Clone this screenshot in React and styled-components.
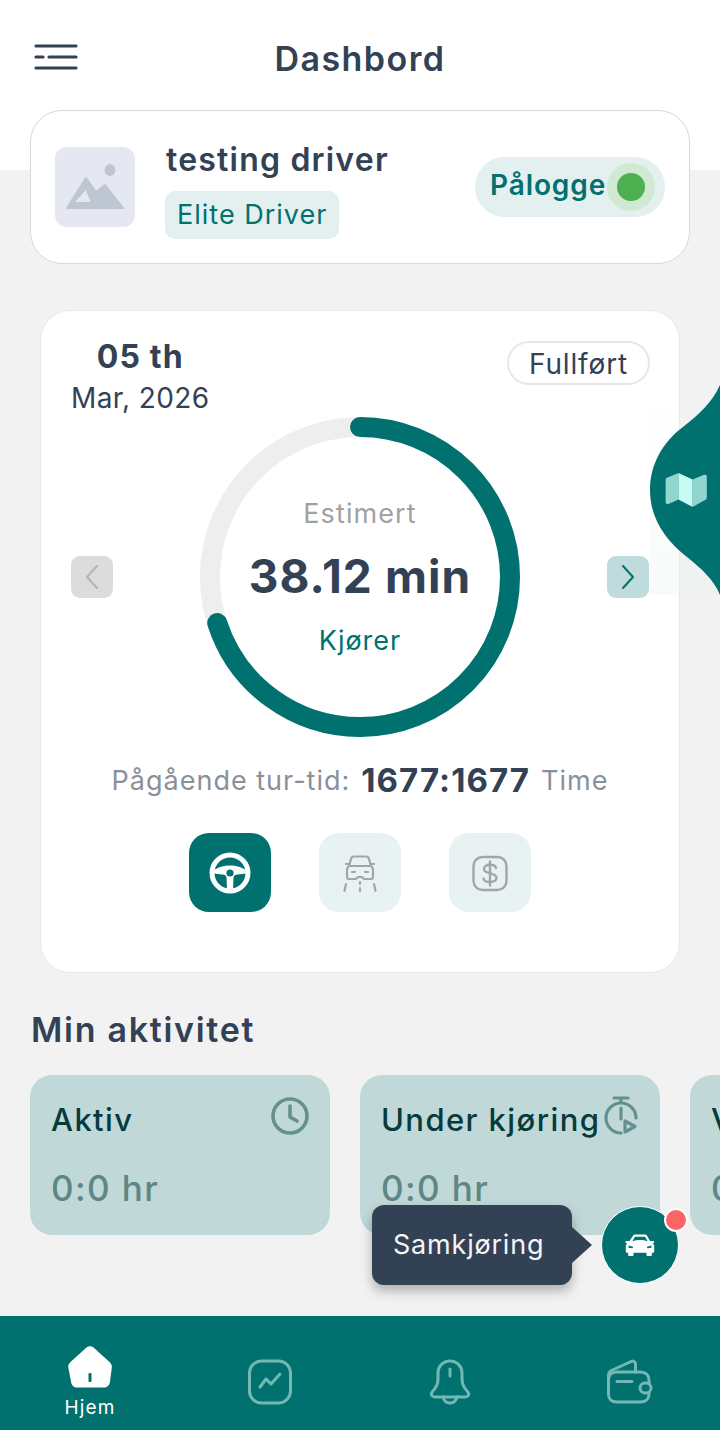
import React from 'react'
import styled, { createGlobalStyle } from 'styled-components'

const teal = '#00716f'
const navy = '#334155'

const GlobalStyle = createGlobalStyle`
  html, body { margin: 0; padding: 0; }
  body { font-family: Inter, "Noto Sans", sans-serif; font-optical-sizing: none; background: #f2f2f2; }
  * { box-sizing: border-box; }
`

const activities = [
  { title: 'Aktiv', value: '0:0 hr', icon: 'clock' },
  { title: 'Under kjøring', value: '0:0 hr', icon: 'timer' },
  { title: 'Venter', value: '0:0 hr', icon: 'clock' },
]

const ClockIcon = () => (
  <svg width="40" height="40" viewBox="0 0 40 40" fill="none" stroke="#64908f" strokeWidth="3.6" strokeLinecap="round" strokeLinejoin="round">
    <circle cx="20" cy="20" r="17" />
    <path d="M20 10v11l7 4" />
  </svg>
)

const TimerIcon = () => (
  <svg width="40" height="40" viewBox="0 0 40 40" fill="none" stroke="#64908f" strokeWidth="3.2" strokeLinecap="round" strokeLinejoin="round">
    <path d="M14 2h14M21 2v4" />
    <path d="M21 37A15 15 0 1 1 36 22" />
    <path d="M21 12v11" />
    <path d="M25 25v11l10-5.500z" />
  </svg>
)

const ImageIcon = () => (
  <svg width="60" height="46" viewBox="0 0 60 46" fill="#bec6d2">
    <ellipse cx="45" cy="6" rx="5.500" ry="6" />
    <path
      fillRule="evenodd"
      stroke="#bec6d2"
      strokeWidth="2"
      strokeLinejoin="round"
      d="M21 14 31 28 40 21 58 44H2zM21 24 8 39H27z"
    />
  </svg>
)

const MenuIcon = () => (
  <svg width="44" height="28" viewBox="0 0 44 28" fill="none" stroke={navy} strokeWidth="3.200" strokeLinecap="round">
    <path d="M2 3h40M2 14h7M15 14h27M2 25h40" />
  </svg>
)

const WheelIcon = () => (
  <svg width="42" height="42" viewBox="0 0 42 42" fill="none">
    <circle cx="21" cy="21" r="18" stroke="#fff" strokeWidth="5" />
    <path d="M4 19c5-4 11-5.500 17-5.500S33 15 38 19l-.5 2.500-9 1c-2 .2-3 .2-4 2.500l-.5 13h-6l-.5-13c-1-2.300-2-2.300-4-2.500l-9-1z" fill="#fff" />
    <circle cx="21" cy="21" r="3.600" fill={teal} />
  </svg>
)

const RoadCarIcon = () => (
  <svg width="40" height="40" viewBox="0 0 40 40" fill="none" stroke="#a3a5a6" strokeWidth="2.200" strokeLinecap="round" strokeLinejoin="round">
    <path d="M9 13l2-7c.4-1.500 1.500-2.500 3-2.500h12c1.500 0 2.600 1 3 2.500l2 7" />
    <path d="M6 11h3M31 11h3" />
    <path d="M9 13h22c1.500 1 2 2.500 2 4v7c0 1-1 2-2 2h-7l-2-2h-4l-2 2H9c-1 0-2-1-2-2v-7c0-1.500.5-3 2-4z" />
    <path d="M12 19h3M25 19h3" />
    <path d="M6 31l-1.500 7M34 31l1.500 7M20 29v2M20 35v3" />
  </svg>
)

const DollarIcon = () => (
  <svg width="38" height="38" viewBox="0 0 38 38" fill="none" stroke="#a3a5a6" strokeWidth="2.400" strokeLinecap="round" strokeLinejoin="round">
    <rect x="2.500" y="3" width="33" height="33" rx="9" />
    <path d="M25 14c-.5-2-2.800-3.200-6-3.200-3.500 0-6 1.600-6 4.200 0 5.800 12.500 2.800 12.500 8.800 0 2.700-2.800 4.200-6.500 4.200-3.500 0-6-1.400-6.500-3.600" />
    <path d="M19 7.500v24" />
  </svg>
)

const MapIcon = () => (
  <svg width="42" height="36" viewBox="0 0 44 38" fill="none">
    <path d="M14 1 2 6c-1 .4-1.500 1-1.500 2v24c0 1.500 1.500 2.300 3 1.700L14 29z" fill="#8fd6cf" />
    <path d="M14 1l15 7v29l-15-8z" fill="#c9fbf5" />
    <path d="M29 8l12-5c1.500-.5 3 .3 3 1.800V27c0 1-.5 2-1.500 2.400L29 37z" fill="#8fd6cf" />
  </svg>
)

const CarIcon = () => (
  <svg width="30" height="22" viewBox="0 0 32 24" fill="#fff">
    <path d="M8.500 1.500C9 .800 10 .500 11 .500h10c1 0 2 .300 2.500 1l3.500 6h3c.800 0 1.500.500 1.500 1.200s-.700 1.300-1.500 1.300H30l1.500 2.500V19c0 .800-.700 1.500-1.500 1.500H2c-.800 0-1.500-.700-1.500-1.500v-6.500L2 10h-.500C.700 10 0 9.400 0 8.700S.700 7.500 1.500 7.500h3z" />
    <path d="M3 20h6v2.500c0 .800-.700 1.500-1.500 1.500h-3C3.700 24 3 23.300 3 22.500zM23 20h6v2.500c0 .800-.700 1.500-1.500 1.500h-3c-.800 0-1.500-.700-1.500-1.500z" />
    <path d="M10.500 3h11l2.800 4.800c-5-1.800-11.600-1.800-16.600 0z" fill={teal} />
    <path d="M3.500 12.500l5 1.500-.5 1.500-4.500-.5zM28.500 12.500l-5 1.500.5 1.500 4.500-.5z" fill={teal} />
  </svg>
)

const HomeIcon = () => (
  <svg width="44" height="42" viewBox="0 0 44 42" fill="none">
    <path d="M18.500 1.500c2-1.800 5-1.800 7 0L41 15.500c2 1.800 3 3.500 2.800 6l-1.800 14c-.4 3.500-2.500 6-6 6H9c-3.500 0-5.600-2.500-6-6L.3 21.500c-.3-2.500.7-4.200 2.700-6z" fill="#fff" />
    <rect x="20.500" y="27" width="3" height="9" rx="1" fill={teal} />
  </svg>
)

const navStroke = '#74b8b4'

const ChartIcon = () => (
  <svg width="46" height="46" viewBox="0 0 46 46" fill="none" stroke={navStroke} strokeWidth="3" strokeLinecap="round" strokeLinejoin="round">
    <rect x="2.500" y="2" width="41" height="42" rx="12" />
    <path d="M13 28l6-8 5 5 9-10" />
  </svg>
)

const BellIcon = () => (
  <svg width="42" height="46" viewBox="0 0 42 46" fill="none" stroke={navStroke} strokeWidth="3" strokeLinecap="round" strokeLinejoin="round">
    <path d="M21 2c-7 0-12 5.500-12 12v6c0 6-2 9-5.500 12.500C1 35.500 3 38 6 38h30c3 0 5-2.500 2.500-5.500C35 29 33 26 33 20v-6c0-6.500-5-12-12-12z" />
    <path d="M21 10v7M14 38c1 4 3.500 6 7 6s6-2 7-6" />
  </svg>
)

const WalletIcon = () => (
  <svg width="48" height="46" viewBox="0 0 48 46" fill="none" stroke={navStroke} strokeWidth="3" strokeLinecap="round" strokeLinejoin="round">
    <path d="M2.500 21c0-5 3-8 8-8h24c5 0 8.500 3 8.500 8v14c0 5-3.500 8-8.500 8h-24c-5 0-8-3-8-8z" />
    <path d="M2.500 21v-5c0-2 1-3.500 3-4.500L25 2.500c2.300-1 4.500.2 4.500 2.500v8" />
    <path d="M11 22.500h15" />
    <rect x="34" y="24" width="11" height="10" rx="5" fill={teal} />
  </svg>
)

const App = () => {
  const radius = 150
  const circ = 2 * Math.PI * radius
  const done = circ * 0.7

  return (
    <Page>
      <GlobalStyle />
      <TopBar>
        <MenuButton><MenuIcon /></MenuButton>
        <PageTitle>Dashbord</PageTitle>
      </TopBar>

      <ProfileCard>
        <Avatar><ImageIcon /></Avatar>
        <ProfileInfo>
          <DriverName>testing driver</DriverName>
          <RankBadge>Elite Driver</RankBadge>
        </ProfileInfo>
        <StatusPill>
          <StatusText>Pålogge</StatusText>
          <StatusDot />
        </StatusPill>
      </ProfileCard>

      <TripCard>
        <TripHead>
          <DateBlock>
            <DateDay>05 th</DateDay>
            <DateMonth>Mar, 2026</DateMonth>
          </DateBlock>
          <StateChip>Fullført</StateChip>
        </TripHead>

        <RingRow>
          <ArrowButton $active={false}>
            <svg width="16" height="26" viewBox="0 0 16 26" fill="none" stroke="#b4b4b4" strokeWidth="2" strokeLinecap="round" strokeLinejoin="round">
              <path d="M13 2 3 13l10 11" />
            </svg>
          </ArrowButton>
          <Ring>
            <RingSvg width="320" height="320" viewBox="0 0 320 320" fill="none">
              <circle cx="160" cy="160" r={radius} stroke="#eeeeee" strokeWidth="20" />
              <circle
                cx="160"
                cy="160"
                r={radius}
                stroke={teal}
                strokeWidth="20"
                strokeLinecap="round"
                strokeDasharray={`${done} ${circ}`}
                transform="rotate(-90 160 160)"
              />
            </RingSvg>
            <RingLabel>Estimert</RingLabel>
            <RingValue>38.12 min</RingValue>
            <RingState>Kjører</RingState>
          </Ring>
          <ArrowButton $active>
            <svg width="16" height="26" viewBox="0 0 16 26" fill="none" stroke={teal} strokeWidth="2" strokeLinecap="round" strokeLinejoin="round">
              <path d="M3 2l10 11L3 24" />
            </svg>
          </ArrowButton>
        </RingRow>

        <TripTime>
          <span>Pågående tur-tid:</span>
          <TripTimeValue>1677:1677</TripTimeValue>
          <span>Time</span>
        </TripTime>

        <TabRow>
          <TabButton $active><WheelIcon /></TabButton>
          <TabButton><RoadCarIcon /></TabButton>
          <TabButton><DollarIcon /></TabButton>
        </TabRow>
      </TripCard>

      <SectionTitle>Min aktivitet</SectionTitle>
      <ActivityRow>
        {activities.map(item => (
          <ActivityCard key={item.title}>
            <ActivityHead>
              <ActivityTitle>{item.title}</ActivityTitle>
              <ActivityIcon>{item.icon === 'clock' ? <ClockIcon /> : <TimerIcon />}</ActivityIcon>
            </ActivityHead>
            <ActivityValue>{item.value}</ActivityValue>
          </ActivityCard>
        ))}
      </ActivityRow>

      <BottomNav>
        <NavItem $active>
          <HomeIcon />
          <NavLabel>Hjem</NavLabel>
        </NavItem>
        <NavItem><ChartIcon /></NavItem>
        <NavItem><BellIcon /></NavItem>
        <NavItem><WalletIcon /></NavItem>
      </BottomNav>

      <MapHandle>
        <svg width="70" height="210" viewBox="0 0 70 210" fill={teal}>
          <path d="M70 0C62 18 48 30 33 42 14 56 0 78 0 105c0 27 14 49 37 67 15 12 27 23 33 38z" />
        </svg>
        <MapGlyph><MapIcon /></MapGlyph>
      </MapHandle>

      <Tooltip>Samkjøring</Tooltip>
      <RideButton>
        <CarIcon />
        <RideBadge />
      </RideButton>
    </Page>
  )
}

export default App

const Page = styled.div`
  position: relative;
  width: 720px;
  height: 1430px;
  overflow: hidden;
  background: linear-gradient(#fff 170px, #f2f2f2 170px);
  display: flex;
  flex-direction: column;
`

const TopBar = styled.header`
  position: relative;
  height: 110px;
  flex: none;
  display: flex;
  align-items: center;
  justify-content: center;
  padding-top: 7px;
`

const MenuButton = styled.div`
  position: absolute;
  left: 34px;
  top: 43px;
  display: flex;
`

const PageTitle = styled.h1`
  margin: 0;
  font-size: 34px;
  font-weight: 600;
  letter-spacing: 1.45px;
  color: ${navy};
`

const ProfileCard = styled.section`
  flex: none;
  height: 154px;
  margin: 0 30px;
  padding: 0 24px;
  background: #fff;
  border: 1px solid #d9d9d9;
  border-radius: 32px;
  display: flex;
  align-items: center;
`

const Avatar = styled.div`
  width: 80px;
  height: 80px;
  border-radius: 12px;
  background: #e5e8f1;
  display: flex;
  align-items: center;
  justify-content: center;
`

const ProfileInfo = styled.div`
  margin-left: 30px;
  padding-top: 5px;
  flex: 1;
  display: flex;
  flex-direction: column;
  align-items: flex-start;
  gap: 11px;
`

const DriverName = styled.div`
  margin-left: 1px;
  font-size: 32px;
  line-height: 40px;
  font-weight: 600;
  letter-spacing: 1.2px;
  color: ${navy};
`

const RankBadge = styled.div`
  height: 48px;
  padding: 0 12px;
  border-radius: 10px;
  background: #e3f0ef;
  color: ${teal};
  font-size: 27px;
  font-weight: 400;
  letter-spacing: 1px;
  line-height: 48px;
`

const StatusPill = styled.div`
  width: 190px;
  height: 60px;
  padding: 0 8px 0 15px;
  border-radius: 30px;
  background: #e3f0ef;
  display: flex;
  align-items: center;
  justify-content: space-between;
`

const StatusText = styled.span`
  margin-top: -5px;
  font-size: 28px;
  font-weight: 600;
  letter-spacing: 0.9px;
  color: ${teal};
`

const StatusDot = styled.span`
  width: 28px;
  height: 28px;
  margin-right: 12px;
  border-radius: 50%;
  background: #4caf50;
  box-shadow: 0 0 0 10px #cfe9d2;
`

const TripCard = styled.section`
  flex: none;
  height: 663px;
  margin: 46px 40px 0;
  padding: 30px 30px 0;
  background: #fff;
  border: 1px solid #e8e8e8;
  border-radius: 30px;
  display: flex;
  flex-direction: column;
`

const TripHead = styled.div`
  height: 76px;
  flex: none;
  display: flex;
  justify-content: space-between;
  align-items: flex-start;
`

const DateBlock = styled.div`
  display: flex;
  flex-direction: column;
  align-items: center;
`

const DateDay = styled.div`
  font-size: 32px;
  line-height: 32px;
  font-weight: 700;
  letter-spacing: 1.1px;
  color: ${navy};
`

const DateMonth = styled.div`
  margin-top: 8px;
  font-size: 28px;
  line-height: 34px;
  letter-spacing: 0.4px;
  color: ${navy};
`

const StateChip = styled.div`
  width: 143px;
  height: 44px;
  margin-right: -1px;
  border: 2px solid #e6e6e6;
  border-radius: 22px;
  text-align: center;
  line-height: 42px;
  font-size: 28px;
  letter-spacing: 0.85px;
  color: ${navy};
`

const RingRow = styled.div`
  flex: none;
  height: 320px;
  display: flex;
  align-items: center;
  justify-content: space-between;
`

const ArrowButton = styled.div`
  width: 42px;
  height: 42px;
  border-radius: 9px;
  background: ${props => (props.$active ? '#bfdbdb' : '#dcdcdc')};
  display: flex;
  align-items: center;
  justify-content: center;
`

const Ring = styled.div`
  position: relative;
  width: 320px;
  height: 320px;
  display: flex;
  flex-direction: column;
  align-items: center;
`

const RingSvg = styled.svg`
  position: absolute;
  inset: 0;
`

const RingLabel = styled.div`
  margin-top: 81px;
  font-size: 27px;
  line-height: 32px;
  letter-spacing: 1.1px;
  color: #a1a1a1;
`

const RingValue = styled.div`
  margin-top: 18px;
  font-size: 46px;
  line-height: 56px;
  font-weight: 700;
  letter-spacing: 1.1px;
  color: ${navy};
`

const RingState = styled.div`
  margin-top: 21px;
  font-size: 27px;
  line-height: 32px;
  letter-spacing: 1px;
  color: ${teal};
`

const TripTime = styled.div`
  margin-top: 24px;
  height: 38px;
  display: flex;
  align-items: center;
  justify-content: center;
  gap: 11px;
  font-size: 27px;
  letter-spacing: 1px;
  color: #8a9099;
`

const TripTimeValue = styled.span`
  font-size: 33px;
  font-weight: 700;
  letter-spacing: 1.05px;
  color: ${navy};
`

const TabRow = styled.div`
  margin-top: 34px;
  display: flex;
  justify-content: center;
  gap: 48px;
`

const TabButton = styled.div`
  width: 82px;
  height: 79px;
  border-radius: 20px;
  background: ${props => (props.$active ? teal : '#e9f2f3')};
  display: flex;
  align-items: center;
  justify-content: center;
`

const SectionTitle = styled.h2`
  margin: 35px 0 0 31px;
  font-size: 34px;
  line-height: 44px;
  font-weight: 600;
  letter-spacing: 1.7px;
  color: ${navy};
`

const ActivityRow = styled.div`
  margin-top: 23px;
  padding-left: 30px;
  display: flex;
  gap: 30px;
`

const ActivityCard = styled.div`
  flex: none;
  width: 300px;
  height: 160px;
  padding: 23px 21px 0;
  border-radius: 22px;
  background: #c0d8d8;
`

const ActivityHead = styled.div`
  position: relative;
  height: 42px;
  display: flex;
  align-items: center;
`

const ActivityTitle = styled.div`
  font-size: 31px;
  font-weight: 500;
  letter-spacing: 1.4px;
  color: #063b3c;
  white-space: nowrap;
`

const ActivityIcon = styled.div`
  position: absolute;
  right: -1px;
  top: -2px;
  display: flex;
`

const ActivityValue = styled.div`
  margin-top: 27px;
  font-size: 35px;
  line-height: 42px;
  font-weight: 500;
  letter-spacing: 1.4px;
  color: #5e8685;
`

const BottomNav = styled.nav`
  margin-top: auto;
  height: 114px;
  flex: none;
  background: ${teal};
  display: grid;
  grid-template-columns: 180px 180px 180px 180px;
`

const NavItem = styled.div`
  padding-top: ${props => (props.$active ? '30px' : '43px')};
  display: flex;
  flex-direction: column;
  align-items: center;
`

const NavLabel = styled.span`
  margin-top: 8px;
  font-size: 19px;
  line-height: 24px;
  letter-spacing: 1.2px;
  color: #fff;
`

const MapHandle = styled.div`
  position: absolute;
  right: 0;
  top: 385px;
  width: 70px;
  height: 210px;
  display: flex;
  background: linear-gradient(rgba(240, 245, 245, 0), rgba(233, 240, 240, 0.3));
`

const MapGlyph = styled.div`
  position: absolute;
  left: 15px;
  top: 87px;
  display: flex;
`

const Tooltip = styled.div`
  position: absolute;
  left: 372px;
  top: 1205px;
  width: 200px;
  height: 80px;
  padding-left: 21px;
  border-radius: 12px;
  background: ${navy};
  box-shadow: 0 6px 12px rgba(0, 0, 0, 0.28);
  color: #f3f5f7;
  font-size: 27px;
  letter-spacing: 0.8px;
  line-height: 80px;

  &::after {
    content: '';
    position: absolute;
    left: 200px;
    top: 22px;
    border-top: 18px solid transparent;
    border-bottom: 18px solid transparent;
    border-left: 20px solid ${navy};
  }
`

const RideButton = styled.div`
  position: absolute;
  left: 601px;
  top: 1206px;
  width: 78px;
  height: 78px;
  border-radius: 50%;
  border: 1px solid #fff;
  background: ${teal};
  display: flex;
  align-items: center;
  justify-content: center;
`

const RideBadge = styled.span`
  position: absolute;
  right: -10px;
  top: 1px;
  width: 24px;
  height: 24px;
  border-radius: 50%;
  border: 2px solid #fff;
  background: #ff6464;
`
